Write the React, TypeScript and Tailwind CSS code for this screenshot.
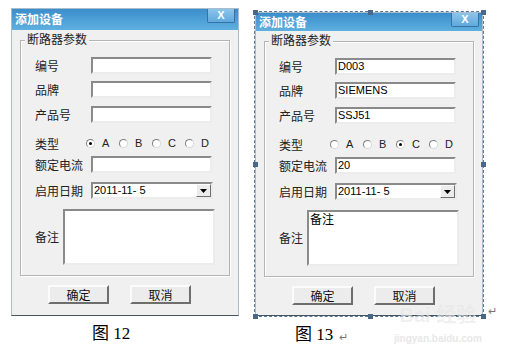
import React from 'react';

interface FormData {
  code: string;
  brand: string;
  model: string;
  type: string;
  current: string;
  date: string;
  note: string;
}

const cjk = { fontFamily: '"Noto Sans CJK SC", "Liberation Sans", sans-serif' };
const latin = { fontFamily: '"Liberation Sans", "Noto Sans CJK SC", sans-serif' };
const serif = { fontFamily: '"Liberation Serif", "Noto Sans CJK SC", serif' };

function TextBox({ value }: { value: string }) {
  return (
    <div className="w-[121px] h-[17px] bg-white border-2 border-t-[#8a8a8a] border-l-[#8a8a8a] border-r-[#ececec] border-b-[#ececec] flex items-center pl-[1px] text-[11px] text-black leading-none" style={latin}>
      {value}
    </div>
  );
}

function Radio({ label, checked }: { label: string; checked: boolean }) {
  return (
    <div className="w-[33px] flex items-center gap-[7px]">
      <div className="w-[9px] h-[9px] rounded-full bg-white border border-t-[#808080] border-l-[#808080] border-r-[#d8d8d8] border-b-[#d8d8d8] flex items-center justify-center">
        {checked && <div className="w-[3px] h-[3px] rounded-full bg-black" />}
      </div>
      <span className="text-[11px] text-[#222] leading-none" style={latin}>{label}</span>
    </div>
  );
}

function Row({ label, children, className }: { label: string; children: React.ReactNode; className?: string }) {
  return (
    <div className={'flex items-center h-[17px] ' + (className || '')}>
      <span className="w-[56px] text-[12px] text-[#222] leading-none" style={cjk}>{label}</span>
      {children}
    </div>
  );
}

function Button({ label }: { label: string }) {
  return (
    <div className="w-[61px] h-[19px] bg-[#ececec] border-2 border-t-[#fbfbfb] border-l-[#fbfbfb] border-r-[#6e6e6e] border-b-[#6e6e6e] flex items-center justify-center text-[12px] text-[#111] leading-none" style={cjk}>
      {label}
    </div>
  );
}

function Dialog({ data, short }: { data: FormData; short?: boolean }) {
  return (
    <div className="flex flex-col w-[228px] bg-[#f0f0f0] border border-[#a9bccb] border-b-[#45565e]">
      {/* Title bar */}
      <div className={(short ? 'h-[18px]' : 'h-[21px]') + ' flex items-start justify-between bg-gradient-to-b from-[#3b8ecb] to-[#5eb0e0]'}>
        <span className={(short ? 'mt-[3px]' : 'mt-[4px]') + ' ml-[3px] text-[12px] font-bold text-white leading-none'} style={cjk}>添加设备</span>
        <div className="mr-[3px] w-[28px] h-[14px] border border-t-0 border-[#3673a3] rounded-b-[2px] bg-gradient-to-b from-[#8cc5ea] to-[#5ea9dc] flex items-center justify-center text-[11px] font-bold text-white leading-none" style={latin}>
          X
        </div>
      </div>

      {/* Group */}
      <div className="px-[8px] pt-[10px]">
        <div className="relative border border-[#b4b4b4] shadow-[inset_1px_1px_0_#ffffff,1px_1px_0_#ffffff] pt-[16px] pb-[10px] pl-[14px]">
          <span className="absolute -top-[8px] left-[4px] bg-[#f0f0f0] px-[2px] text-[12px] text-[#222] leading-none" style={cjk}>断路器参数</span>
          <Row label="编号"><TextBox value={data.code} /></Row>
          <Row label="品牌" className="mt-[7px]"><TextBox value={data.brand} /></Row>
          <Row label="产品号" className="mt-[8px]"><TextBox value={data.model} /></Row>
          <div className="flex items-center h-[17px] mt-[12px]">
            <span className="w-[51px] text-[12px] text-[#222] leading-none" style={cjk}>类型</span>
            {['A', 'B', 'C', 'D'].map(t => <Radio key={t} label={t} checked={t === data.type} />)}
          </div>
          <Row label="额定电流" className="mt-[4px]"><TextBox value={data.current} /></Row>
          <Row label="启用日期" className="mt-[9px]">
            <div className="w-[122px] h-[17px] bg-white border-2 border-t-[#8a8a8a] border-l-[#8a8a8a] border-r-[#ececec] border-b-[#ececec] flex items-center justify-between pl-[1px] text-[11px] text-black leading-none" style={latin}>
              <span>{data.date}</span>
              <div className="w-[15px] h-[13px] bg-[#ececec] border border-t-[#fff] border-l-[#fff] border-r-[#707070] border-b-[#707070] flex items-center justify-center">
                <svg width="7" height="4" viewBox="0 0 7 4"><polygon points="0,0 7,0 3.5,4" fill="#000" /></svg>
              </div>
            </div>
          </Row>
          <div className="flex items-center mt-[10px]">
            <span className="w-[28px] text-[12px] text-[#222] leading-none" style={cjk}>备注</span>
            <div className="w-[152px] h-[56px] bg-white border-2 border-t-[#8a8a8a] border-l-[#8a8a8a] border-r-[#ececec] border-b-[#ececec] pl-[1px] pt-[1px] text-[12px] text-black leading-none" style={cjk}>
              {data.note}
            </div>
          </div>
        </div>
      </div>

      {/* Buttons */}
      <div className={'flex gap-[21px] pl-[36px] mt-[9px] ' + (short ? 'mb-[10px]' : 'mb-[11px]')}>
        <Button label="确定" />
        <Button label="取消" />
      </div>
    </div>
  );
}

function Handle({ className }: { className: string }) {
  return <div className={'absolute w-[5px] h-[5px] bg-[#4a6788] ' + className} />;
}

export default function App() {
  const empty: FormData = { code: '', brand: '', model: '', type: 'A', current: '', date: '2011-11-  5', note: '' };
  const filled: FormData = { code: 'D003', brand: 'SIEMENS', model: 'SSJ51', type: 'C', current: '20', date: '2011-11-  5', note: '备注' };

  return (
    <div className="relative w-[508px] h-[351px] bg-white flex overflow-hidden">
      {/* Figure 12 */}
      <div className="flex flex-col ml-[11px] mt-[8px]">
        <Dialog data={empty} />
        <div className="ml-[81px] mt-[9px] text-[17px] text-black leading-none" style={serif}>
          图 12
        </div>
      </div>

      {/* Figure 13 */}
      <div className="flex flex-col ml-[16px] mt-[12px]">
        <div className="relative outline-1 outline-dashed outline-[#5a7696]">
          <Dialog data={filled} short />
          <Handle className="-top-[2px] -left-[2px]" />
          <Handle className="-top-[2px] left-[113px]" />
          <Handle className="-top-[2px] -right-[3px]" />
          <Handle className="top-[150px] -left-[2px]" />
          <Handle className="top-[150px] -right-[3px]" />
          <Handle className="-bottom-[3px] -left-[2px]" />
          <Handle className="-bottom-[3px] left-[113px]" />
          <Handle className="-bottom-[3px] -right-[3px]" />
          <span className="absolute bottom-[-1px] -right-[14px] text-[11px] text-[#777] leading-none" style={latin}>↵</span>
        </div>
        <div className="flex items-end ml-[40px] mt-[10px] text-[17px] text-black leading-none" style={serif}>
          <span>图 13</span>
          <span className="ml-[6px] text-[11px] text-[#777]">↵</span>
        </div>
      </div>

      {/* watermark */}
      <div className="absolute left-[394px] top-[305px] flex flex-col items-center pointer-events-none">
        <span className="text-[20px] font-bold text-[#e6e6e6]/60 leading-none" style={latin}>Bai 经验</span>
        <span className="mt-[9px] text-[10px] font-bold text-[#e8e8e8] leading-none" style={latin}>jingyan.baidu.com</span>
      </div>
    </div>
  );
}
